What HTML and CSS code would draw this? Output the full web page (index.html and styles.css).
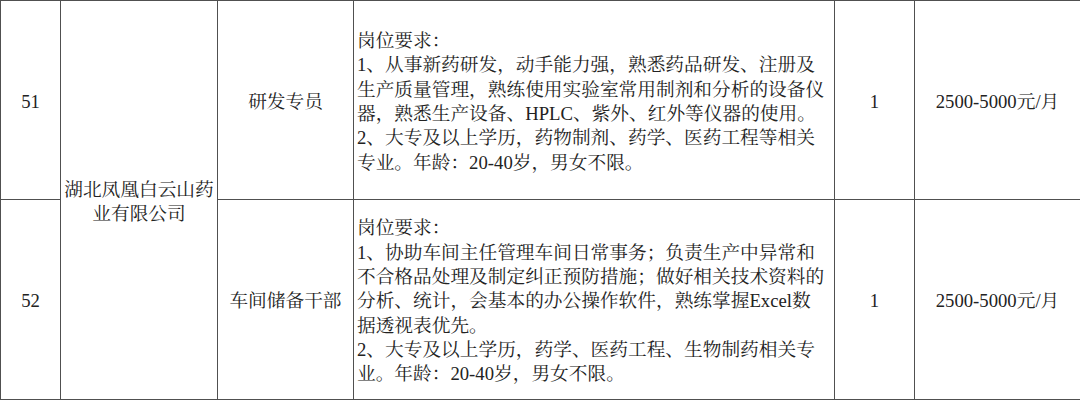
FILE: index.html
```html
<!DOCTYPE html>
<html lang="zh-CN">
<head>
<meta charset="utf-8">
<link rel="stylesheet" href="styles.css">
</head>
<body>
<table class="jobs">
  <colgroup>
    <col class="c-no">
    <col class="c-company">
    <col class="c-title">
    <col class="c-desc">
    <col class="c-count">
    <col class="c-salary">
  </colgroup>
  <tbody>
    <tr class="row-a">
      <td class="center">51</td>
      <td class="center company" rowspan="2">湖北凤凰白云山药<br>业有限公司</td>
      <td class="center">研发专员</td>
      <td class="desc">岗位要求：<br>1、从事新药研发，动手能力强，熟悉药品研发、注册及<br>生产质量管理，熟练使用实验室常用制剂和分析的设备仪<br>器，熟悉生产设备、HPLC、紫外、红外等仪器的使用。<br>2、大专及以上学历，药物制剂、药学、医药工程等相关<br>专业。年龄：20-40岁，男女不限。</td>
      <td class="center">1</td>
      <td class="center">2500-5000元/月</td>
    </tr>
    <tr class="row-b">
      <td class="center">52</td>
      <td class="center">车间储备干部</td>
      <td class="desc">岗位要求：<br>1、协助车间主任管理车间日常事务；负责生产中异常和<br>不合格品处理及制定纠正预防措施；做好相关技术资料的<br>分析、统计，会基本的办公操作软件，熟练掌握Excel数<br>据透视表优先。<br>2、大专及以上学历，药学、医药工程、生物制药相关专<br>业。年龄：20-40岁，男女不限。</td>
      <td class="center">1</td>
      <td class="center">2500-5000元/月</td>
    </tr>
  </tbody>
</table>
</body>
</html>
```

FILE: styles.css
```css
html, body {
  margin: 0;
  padding: 0;
  background: #ffffff;
}

.jobs {
  border-collapse: collapse;
  table-layout: fixed;
  width: 1080px;
  font-family: "Liberation Serif", "Noto Serif CJK SC", "Noto Sans CJK SC", serif;
  font-size: 18.7px;
  line-height: 24.3px;
  color: #222222;
}

.c-no { width: 60px; }
.c-company { width: 157px; }
.c-title { width: 136px; }
.c-desc { width: 481px; }
.c-count { width: 80px; }
.c-salary { width: 166px; }

.jobs td {
  border: 1px solid #505050;
  padding: 4px 3px 0;
  vertical-align: middle;
}

.row-a td { height: 194px; }
.row-b td { height: 195px; }

.center {
  text-align: center;
}

.company {
  border-left-color: #555555;
  border-right-color: #8a8a8a;
  padding-left: 0;
  padding-right: 0;
}

.desc {
  text-align: left;
  white-space: nowrap;
  padding-left: 2px;
}
```
